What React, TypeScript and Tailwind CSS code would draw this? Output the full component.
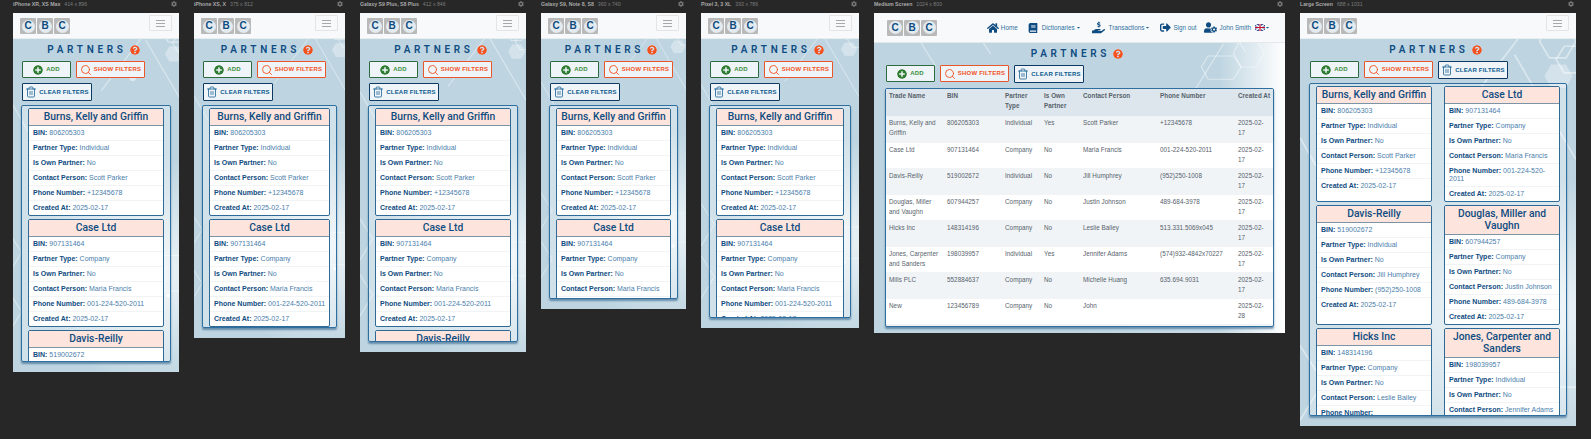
import type { ReactNode } from "react";
import { Search, Trash2 } from "lucide-react";
import {
  FaBook,
  FaCaretDown,
  FaCog,
  FaHandHoldingUsd,
  FaHome,
  FaPlusCircle,
  FaQuestionCircle,
  FaSignOutAlt,
  FaUserCog,
} from "react-icons/fa";

type Partner = {
  name: string;
  bin: string;
  type: string;
  own: string;
  contact: string;
  phone: string;
  created: string;
};

const partners: Partner[] = [
  { name: "Burns, Kelly and Griffin", bin: "806205303", type: "Individual", own: "Yes", contact: "Scott Parker", phone: "+12345678", created: "2025-02-17" },
  { name: "Case Ltd", bin: "907131464", type: "Company", own: "No", contact: "Maria Francis", phone: "001-224-520-2011", created: "2025-02-17" },
  { name: "Davis-Reilly", bin: "519002672", type: "Individual", own: "No", contact: "Jill Humphrey", phone: "(952)250-1008", created: "2025-02-17" },
  { name: "Douglas, Miller and Vaughn", bin: "607944257", type: "Company", own: "No", contact: "Justin Johnson", phone: "489-684-3978", created: "2025-02-17" },
  { name: "Hicks Inc", bin: "148314196", type: "Company", own: "No", contact: "Leslie Bailey", phone: "513.331.5069x045", created: "2025-02-17" },
  { name: "Jones, Carpenter and Sanders", bin: "198039957", type: "Individual", own: "Yes", contact: "Jennifer Adams", phone: "(574)932-4842x70227", created: "2025-02-17" },
  { name: "Mills PLC", bin: "552884637", type: "Company", own: "No", contact: "Michelle Huang", phone: "635.694.9031", created: "2025-02-17" },
  { name: "New", bin: "123456789", type: "Company", own: "No", contact: "John", phone: "", created: "2025-02-28" },
];

const Logo = () => (
  <div className="flex gap-px">
    {["C", "B", "C"].map((letter, i) => (
      <div key={i} className="flex size-4 items-center justify-center rounded-[1px] bg-[#b9b9b9]">
        <div className="flex size-[13px] items-center justify-center rounded-full bg-[#e3ebf0] text-[10px] leading-none font-bold text-[#0f4c81]">
          {letter}
        </div>
      </div>
    ))}
  </div>
);

const MobileNav = () => (
  <div className="flex h-[26px] shrink-0 items-start justify-between border-b border-[#e8edf0] bg-[#f8f9fa] pt-[5px] pr-[7px] pl-[7px]">
    <Logo />
    <div className="-mt-[3px] flex h-4 w-[23px] flex-col items-center justify-center gap-[2px] rounded-[1px] border border-[#e4e4e4]">
      <span className="h-px w-[9px] bg-[#a8a8a8]" />
      <span className="h-px w-[9px] bg-[#a8a8a8]" />
      <span className="h-px w-[9px] bg-[#a8a8a8]" />
    </div>
  </div>
);

const UkFlag = () => (
  <svg width="10" height="7" viewBox="0 0 10 7">
    <rect width="10" height="7" fill="#27408b" />
    <path d="M0 0L10 7M10 0L0 7" stroke="#fff" strokeWidth="1.4" />
    <path d="M5 0V7M0 3.5H10" stroke="#fff" strokeWidth="2.2" />
    <path d="M5 0V7M0 3.5H10" stroke="#c8102e" strokeWidth="1.2" />
  </svg>
);

const NavItem = ({ icon, label, caret, className }: { icon: ReactNode; label: string; caret?: boolean; className: string }) => (
  <div className={`flex items-center text-[6.3px] text-[#2f719f] ${className}`}>
    {icon}
    <span className="flex items-center">
      {label}
      {caret && <FaCaretDown className="ml-px size-[5px] text-[#1f5c8a]" />}
    </span>
  </div>
);

const DesktopNav = () => (
  <div className="flex h-[30px] shrink-0 items-center border-b border-[#e3e8eb] bg-[#f8f9fa] pr-[15px] pl-[13px]">
    <Logo />
    <div className="ml-auto flex items-center">
      <NavItem className="gap-[2px]" icon={<FaHome className="size-[12px] text-[#0f4c81]" />} label="Home" />
      <NavItem className="ml-[10px] gap-[4px]" icon={<FaBook className="size-[10px] text-[#0f4c81]" />} label="Dictionaries" caret />
      <NavItem className="ml-[11px] gap-[4px]" icon={<FaHandHoldingUsd className="size-[13px] text-[#0f4c81]" />} label="Transactions" caret />
      <NavItem className="ml-[10px] gap-[2px]" icon={<FaSignOutAlt className="size-[11px] text-[#0f4c81]" />} label="Sign out" />
      <NavItem className="ml-[7px] gap-[3px]" icon={<FaUserCog className="size-[13px] text-[#0f4c81]" />} label="John Smith" />
      <div className="ml-[4px] flex items-center">
        <UkFlag />
        <FaCaretDown className="size-[5px] text-[#1f5c8a]" />
      </div>
    </div>
  </div>
);

const Title = () => (
  <div className="flex h-[22px] shrink-0 items-center justify-center gap-[3px] pr-[5px]">
    <h1 className="font-['Roboto',sans-serif] text-[10px] leading-none font-semibold tracking-[3.7px] text-[#0f4c81]">PARTNERS</h1>
    <FaQuestionCircle className="size-[10px] rounded-full bg-white/30 text-[#f4511e]" />
  </div>
);

const Buttons = ({ inset }: { inset: string }) => (
  <div className={`flex shrink-0 flex-wrap gap-x-[5px] gap-y-[5px] text-[6px] font-bold tracking-[0.2px] ${inset}`}>
    <button className="flex h-[17px] w-[49px] items-center justify-center gap-[3px] rounded-[1px] border border-[#2d6a3e] bg-[#eef4f7] text-[#3b8f3e]">
      <FaPlusCircle className="size-[10px] rounded-full text-[#2e7d32]" />
      ADD
    </button>
    <button className="flex h-[17px] w-[69px] items-center justify-center gap-[2px] rounded-[1px] border border-[#e8562a] bg-[#eef4f7] text-[#f4511e]">
      <Search className="size-[12px]" strokeWidth={1.8} />
      SHOW FILTERS
    </button>
    <button className="flex h-[18px] w-[70px] items-center justify-center gap-[2px] rounded-[1px] border border-[#0d3a63] bg-[#eef4f7] text-[#0b5a8f]">
      <Trash2 className="size-[12px]" strokeWidth={1.5} />
      CLEAR FILTERS
    </button>
  </div>
);

const Row = ({ label, value }: { label: string; value: string }) => (
  <div className="border-b border-[#f1f3f4] py-[3px] pl-1 text-[7px] leading-[8px] last:border-b-0">
    <b className="text-[#0f4c81]">{label}:</b> <span className="text-[#4a7eab]">{value}</span>
  </div>
);

const Card = ({ p }: { p: Partner }) => (
  <div className="shrink-0 overflow-hidden rounded-[2px] border border-[#2f6a96] bg-white">
    <div className="border-b border-[#7d93a6] bg-[#fde4dc] px-px py-[2px] text-center font-['Roboto',sans-serif] text-[10.3px] leading-[12px] font-medium text-[#0f4c81]">
      {p.name}
    </div>
    <Row label="BIN" value={p.bin} />
    <Row label="Partner Type" value={p.type} />
    <Row label="Is Own Partner" value="No" />
    <Row label="Contact Person" value={p.contact} />
    <Row label="Phone Number" value={p.phone} />
    <Row label="Created At" value={p.created} />
  </div>
);

const CardPanel = ({ columns }: { columns: string }) => (
  <div className={`mb-[10px] min-h-0 flex-1 overflow-hidden rounded-[2px] border border-[#2f6f9f] bg-white/30 shadow-[0_2px_2px_rgba(25,80,125,0.55)] ${columns}`}>
    {partners.map((p) => (
      <Card key={p.name} p={p} />
    ))}
  </div>
);

const TablePanel = () => (
  <div className="mx-[11px] mt-[5px] mb-[6px] min-h-0 flex-1 overflow-hidden rounded-[2px] border border-[#2f6f9f] bg-[#f0f4f7] shadow-[0_2px_2px_rgba(25,80,125,0.55)]">
    <table className="w-full table-fixed border-collapse text-left text-[6.3px] leading-[10px] tracking-[0.05px] text-[#56616b]">
      <colgroup>
        <col className="w-[58px]" />
        <col className="w-[58px]" />
        <col className="w-[39px]" />
        <col className="w-[39px]" />
        <col className="w-[77px]" />
        <col className="w-[78px]" />
        <col />
      </colgroup>
      <thead className="bg-[#dce6ec] text-[#56616b]">
        <tr className="h-[27px] align-top">
          {["Trade Name", "BIN", "Partner Type", "Is Own Partner", "Contact Person", "Phone Number"].map((h) => (
            <th key={h} className="px-[3px] pt-[2px] font-bold">
              {h}
            </th>
          ))}
          <th className="px-[3px] pt-[2px] font-bold whitespace-nowrap">Created At</th>
        </tr>
      </thead>
      <tbody>
        {partners.map((p) => (
          <tr key={p.name} className="h-[26px] border-b border-[#f1f3f5] align-top odd:bg-[#f0f4f7] even:bg-white">
            <td className="px-[3px] pt-[2px]">{p.name}</td>
            <td className="px-[3px] pt-[2px]">{p.bin}</td>
            <td className="px-[3px] pt-[2px]">{p.type}</td>
            <td className="px-[3px] pt-[2px]">{p.own}</td>
            <td className="px-[3px] pt-[2px]">{p.contact}</td>
            <td className="px-[3px] pt-[2px]">{p.phone}</td>
            <td className="px-[3px] pt-[2px]">{p.created}</td>
          </tr>
        ))}
      </tbody>
    </table>
  </div>
);

const NarrowPattern = () => (
  <svg className="absolute inset-0 size-full" viewBox="0 0 166 333" preserveAspectRatio="xMidYMin slice" fill="none">
    <g stroke="#fff" strokeOpacity="0.45" strokeWidth="1">
      <path d="M143 0L88 72M129 25L166 88M0 75L20 110M0 245L14 222L0 200M0 300L14 277L0 255M146 225H166M140 258H166" />
      <path d="M144 17L150 7H160L166 17L160 27H150Z" />
      <path d="M154 28L159 20H167L172 28L167 36H159Z" />
    </g>
    <path d="M147 38L151 31H160L164 38L160 45H151Z" fill="#fff" fillOpacity="0.35" />
    <circle cx="117" cy="60" r="3" fill="#fff" fillOpacity="0.5" />
    <circle cx="150" cy="262" r="2" fill="#fff" fillOpacity="0.7" />
  </svg>
);

const WidePattern = () => (
  <svg className="absolute inset-0 size-full" viewBox="0 0 411 290" preserveAspectRatio="xMidYMin slice" fill="none">
    <g stroke="#fff" strokeOpacity="0.45" strokeWidth="1">
      <path d="M100 0L125 37M75 48L45 0M333 0L356 35M310 70L336 28M0 105H10M0 250L10 235L0 220" />
      <path d="M345 36L352 24H366L373 36L366 49H352Z" />
      <path d="M316 49L322 39H345L352 49L345 60H322Z" />
    </g>
    <circle cx="186" cy="20" r="2" fill="#fff" fillOpacity="0.5" />
    <circle cx="180" cy="33" r="1" fill="#fff" fillOpacity="0.5" />
  </svg>
);

const Frame = ({ label, size, className, children }: { label: string; size: string; className: string; children: ReactNode }) => (
  <div className={`flex shrink-0 flex-col ${className}`}>
    <div className="flex h-[13px] shrink-0 items-start justify-between pt-[1px] pr-[2px] text-[5.2px] leading-[6px] text-[#7c7c7c]">
      <span>
        <b className="text-[#a9a9a9]">{label}</b>
        <span className="ml-1">{size}</span>
      </span>
      <FaCog className="size-[6px] text-[#777]" />
    </div>
    <div className="relative flex min-h-0 flex-1 flex-col overflow-hidden bg-[radial-gradient(ellipse_70%_32%_at_85%_72%,#eef5f8_0%,#bed5e1_100%)]">
      {children}
    </div>
  </div>
);

const Phone = ({ label, size, className }: { label: string; size: string; className: string }) => (
  <Frame label={label} size={size} className={className}>
    <NarrowPattern />
    <div className="relative flex min-h-0 flex-1 flex-col">
      <MobileNav />
      <Title />
      <Buttons inset="px-[9px]" />
      <div className="mx-[8px] mt-[4px] flex min-h-0 flex-1 flex-col">
        <CardPanel columns="flex flex-col gap-[3px] px-[6px] pt-[2px]" />
      </div>
    </div>
  </Frame>
);

export default function App() {
  return (
    <div className="flex h-[439px] w-[1591px] gap-[15px] overflow-hidden bg-[#272727] pl-[13px] font-['Liberation_Sans',sans-serif]">
      <Phone label="iPhone XR, XS Max" size="414 x 896" className="h-[372px] w-[166px]" />
      <Phone label="iPhone XS, X" size="375 x 812" className="h-[338px] w-[151px]" />
      <Phone label="Galaxy S9 Plus, S8 Plus" size="412 x 846" className="h-[352px] w-[166px]" />
      <Phone label="Galaxy S9, Note 8, S8" size="360 x 740" className="h-[309px] w-[145px]" />
      <Phone label="Pixel 3, 3 XL" size="393 x 786" className="h-[328px] w-[158px]" />

      <Frame label="Medium Screen" size="1024 x 800" className="h-[333px] w-[411px]">
        <div className="absolute inset-0 bg-[linear-gradient(90deg,transparent_84%,#fff_100%)]" />
        <WidePattern />
        <div className="relative flex min-h-0 flex-1 flex-col">
          <DesktopNav />
          <Title />
          <Buttons inset="px-[12px]" />
          <TablePanel />
        </div>
      </Frame>

      <Frame label="Large Screen" size="688 x 1031" className="h-[426px] w-[276px]">
        <NarrowPattern />
        <div className="relative flex min-h-0 flex-1 flex-col">
          <MobileNav />
          <Title />
          <Buttons inset="px-[10px]" />
          <div className="mx-[9px] mt-[4px] flex min-h-0 flex-1 flex-col">
            <CardPanel columns="grid auto-rows-max grid-cols-2 content-start gap-x-[12px] gap-y-[3px] px-[6px] pt-[2px]" />
          </div>
        </div>
      </Frame>
    </div>
  );
}
